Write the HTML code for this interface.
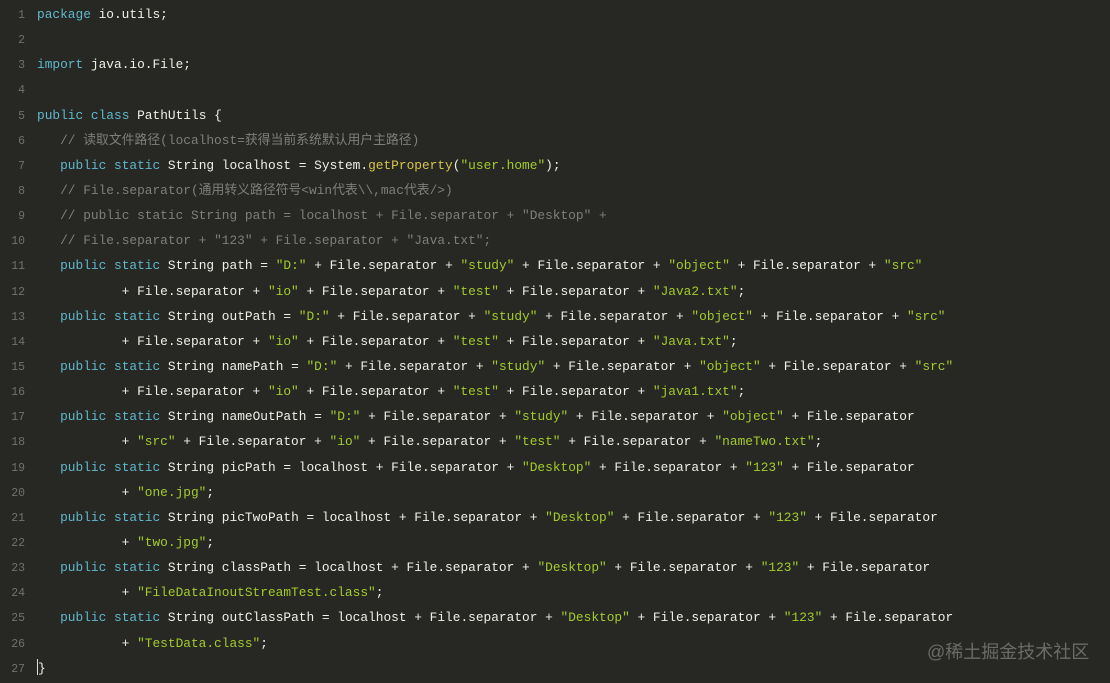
<!DOCTYPE html>
<html><head><meta charset="utf-8"><style>
html,body{margin:0;padding:0;background:#272723;width:1110px;height:683px;overflow:hidden}
.c{position:absolute;left:0;top:2px;font-family:"Liberation Mono","Noto Sans CJK SC",monospace;font-size:12.83px;line-height:25.15px;color:#f0f0ea;white-space:pre}
.l{display:block;height:25.15px}
.n{display:inline-block;width:25px;text-align:right;color:#707070;font-size:11.5px;margin-right:12px}
.k{color:#5fb8cc}.s{color:#a2cc2c}.f{color:#d6c54a}.m{color:#7e7e7a}
.w{position:absolute;left:927px;top:638px;font-family:"Liberation Sans","Noto Sans CJK SC",sans-serif;font-size:18px;color:#6b6b68}
.cur{display:inline-block;width:1px;height:16px;background:#ddd;vertical-align:-3px}
</style></head><body>
<div class="c"><span class="l"><span class="n">1</span><span class="k">package</span> io.utils;</span><span class="l"><span class="n">2</span></span><span class="l"><span class="n">3</span><span class="k">import</span> java.io.File;</span><span class="l"><span class="n">4</span></span><span class="l"><span class="n">5</span><span class="k">public</span> <span class="k">class</span> PathUtils {</span><span class="l"><span class="n">6</span>   <span class="m">// 读取文件路径(localhost=获得当前系统默认用户主路径)</span></span><span class="l"><span class="n">7</span>   <span class="k">public</span> <span class="k">static</span> String localhost = System.<span class="f">getProperty</span>(<span class="s">"user.home"</span>);</span><span class="l"><span class="n">8</span>   <span class="m">// File.separator(通用转义路径符号&lt;win代表\\,mac代表/&gt;)</span></span><span class="l"><span class="n">9</span>   <span class="m">// public static String path = localhost + File.separator + "Desktop" +</span></span><span class="l"><span class="n">10</span>   <span class="m">// File.separator + "123" + File.separator + "Java.txt";</span></span><span class="l"><span class="n">11</span>   <span class="k">public</span> <span class="k">static</span> String path = <span class="s">"D:"</span> + File.separator + <span class="s">"study"</span> + File.separator + <span class="s">"object"</span> + File.separator + <span class="s">"src"</span></span><span class="l"><span class="n">12</span>           + File.separator + <span class="s">"io"</span> + File.separator + <span class="s">"test"</span> + File.separator + <span class="s">"Java2.txt"</span>;</span><span class="l"><span class="n">13</span>   <span class="k">public</span> <span class="k">static</span> String outPath = <span class="s">"D:"</span> + File.separator + <span class="s">"study"</span> + File.separator + <span class="s">"object"</span> + File.separator + <span class="s">"src"</span></span><span class="l"><span class="n">14</span>           + File.separator + <span class="s">"io"</span> + File.separator + <span class="s">"test"</span> + File.separator + <span class="s">"Java.txt"</span>;</span><span class="l"><span class="n">15</span>   <span class="k">public</span> <span class="k">static</span> String namePath = <span class="s">"D:"</span> + File.separator + <span class="s">"study"</span> + File.separator + <span class="s">"object"</span> + File.separator + <span class="s">"src"</span></span><span class="l"><span class="n">16</span>           + File.separator + <span class="s">"io"</span> + File.separator + <span class="s">"test"</span> + File.separator + <span class="s">"java1.txt"</span>;</span><span class="l"><span class="n">17</span>   <span class="k">public</span> <span class="k">static</span> String nameOutPath = <span class="s">"D:"</span> + File.separator + <span class="s">"study"</span> + File.separator + <span class="s">"object"</span> + File.separator</span><span class="l"><span class="n">18</span>           + <span class="s">"src"</span> + File.separator + <span class="s">"io"</span> + File.separator + <span class="s">"test"</span> + File.separator + <span class="s">"nameTwo.txt"</span>;</span><span class="l"><span class="n">19</span>   <span class="k">public</span> <span class="k">static</span> String picPath = localhost + File.separator + <span class="s">"Desktop"</span> + File.separator + <span class="s">"123"</span> + File.separator</span><span class="l"><span class="n">20</span>           + <span class="s">"one.jpg"</span>;</span><span class="l"><span class="n">21</span>   <span class="k">public</span> <span class="k">static</span> String picTwoPath = localhost + File.separator + <span class="s">"Desktop"</span> + File.separator + <span class="s">"123"</span> + File.separator</span><span class="l"><span class="n">22</span>           + <span class="s">"two.jpg"</span>;</span><span class="l"><span class="n">23</span>   <span class="k">public</span> <span class="k">static</span> String classPath = localhost + File.separator + <span class="s">"Desktop"</span> + File.separator + <span class="s">"123"</span> + File.separator</span><span class="l"><span class="n">24</span>           + <span class="s">"FileDataInoutStreamTest.class"</span>;</span><span class="l"><span class="n">25</span>   <span class="k">public</span> <span class="k">static</span> String outClassPath = localhost + File.separator + <span class="s">"Desktop"</span> + File.separator + <span class="s">"123"</span> + File.separator</span><span class="l"><span class="n">26</span>           + <span class="s">"TestData.class"</span>;</span><span class="l"><span class="n">27</span><span class="cur"></span>}</span></div>
<div class="w">@稀土掘金技术社区</div>
</body></html>
